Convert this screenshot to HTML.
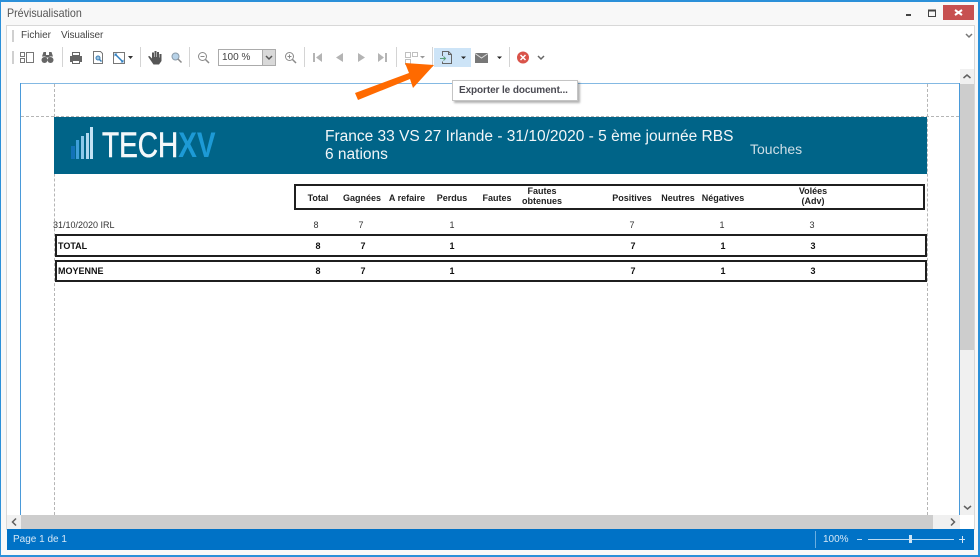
<!DOCTYPE html>
<html lang="fr">
<head>
<meta charset="utf-8">
<title>Prévisualisation</title>
<style>
html,body{margin:0;padding:0;width:980px;height:557px;overflow:hidden;background:#fff}
body{position:relative;font-family:"Liberation Sans",sans-serif}
.a{position:absolute}
.t{position:absolute;white-space:nowrap}
.ui{color:#444;font-size:10px}
.h{font-size:9px;font-weight:bold;color:#222;text-align:center;line-height:10px;transform:translateX(-50%)}
.d{font-size:9px;color:#333;transform:translateX(-50%)}
.b{font-size:9px;font-weight:bold;color:#111;transform:translateX(-50%)}
.box{position:absolute;border:2px solid #1f1f1f;box-sizing:border-box;background:#fff}
.sep{position:absolute;top:47px;width:1px;height:20px;background:#d4d4d4}
svg{position:absolute;left:0;top:0}
</style>
</head>
<body>
<div class="a" style="left:0;top:0;width:980px;height:557px;background:#f8f8f8"></div>
<div class="a" style="left:0;top:0;width:980px;height:2px;background:#2b90d9"></div>
<div class="a" style="left:0;top:0;width:1px;height:557px;background:#2b90d9"></div>
<div class="a" style="right:0;top:0;width:2px;height:557px;background:#2b90d9"></div>
<div class="a" style="left:0;top:555px;width:980px;height:2px;background:#2b90d9"></div>

<div class="t" style="left:7px;top:6px;font-size:12px;color:#555;transform:scaleX(.89);transform-origin:left center">Prévisualisation</div>
<div class="a" style="left:943px;top:5px;width:31px;height:15px;background:#c75050"></div>

<div class="a" style="left:6px;top:25px;width:969px;height:505px;box-sizing:border-box;border:1px solid #d8d8d8;background:#fff"></div>
<div class="a" style="left:12px;top:30px;width:2px;height:12px;background:#d0d0d0"></div>
<div class="a" style="left:12px;top:51px;width:2px;height:13px;background:#d0d0d0"></div>
<div class="t ui" style="left:21px;top:30px">Fichier</div>
<div class="t ui" style="left:61px;top:30px;letter-spacing:-.1px">Visualiser</div>

<div class="sep" style="left:62px"></div>
<div class="sep" style="left:140px"></div>
<div class="sep" style="left:189px"></div>
<div class="sep" style="left:304px"></div>
<div class="sep" style="left:396px"></div>
<div class="sep" style="left:432px"></div>
<div class="sep" style="left:509px"></div>

<div class="a" style="left:434px;top:48px;width:37px;height:19px;background:#cde4f7"></div>

<div class="a" style="left:218px;top:49px;width:58px;height:17px;box-sizing:border-box;border:1px solid #ababab;background:#fff"></div>
<div class="a" style="left:262px;top:49px;width:14px;height:17px;box-sizing:border-box;border:1px solid #ababab;background:#d9d9d9"></div>
<div class="t" style="left:222px;top:52px;font-size:10px;color:#444">100 %</div>

<!-- Viewer -->
<div class="a" style="left:20px;top:83px;width:940px;height:432px;background:#fff"></div>
<div class="a" style="left:20px;top:83px;width:940px;height:1px;background:#84b9e3"></div>
<div class="a" style="left:20px;top:83px;width:1px;height:432px;background:#4a9ad9"></div>
<div class="a" style="left:959px;top:83px;width:1px;height:432px;background:#4a9ad9"></div>

<!-- Guides -->
<div class="a" style="left:54px;top:84px;width:0;height:431px;border-left:1px dashed #b5b5b5"></div>
<div class="a" style="left:927px;top:84px;width:0;height:431px;border-left:1px dashed #b5b5b5"></div>
<div class="a" style="left:21px;top:116px;width:938px;height:0;border-top:1px dashed #b5b5b5"></div>

<!-- Banner -->
<div class="a" style="left:54px;top:117px;width:873px;height:57px;background:#006488"></div>
<div class="a" style="left:71px;top:146px;width:4px;height:13px;background:#1272b8"></div>
<div class="a" style="left:76px;top:140px;width:3px;height:19px;background:#3f9fd8"></div>
<div class="a" style="left:81px;top:136px;width:3px;height:23px;background:#8cc8ea"></div>
<div class="a" style="left:86px;top:133px;width:3px;height:26px;background:#b0d8f0"></div>
<div class="a" style="left:90px;top:127px;width:3px;height:32px;background:#c4e2f4"></div>
<div class="t" style="left:102px;top:126px;font-size:35px;line-height:40px;color:#f4f8fa;transform:scaleX(.8);transform-origin:left center;-webkit-text-stroke:.6px #f4f8fa">TECH<span style="color:#1d9ad6;font-weight:bold;-webkit-text-stroke:0">XV</span></div>
<div class="t" style="left:325px;top:128px;font-size:15.500px;line-height:18px;color:#f2f6f8">France 33 VS 27 Irlande - 31/10/2020 - 5 ème journée RBS<br>6 nations</div>
<div class="t" style="left:750px;top:141px;font-size:14px;color:#cfdfe7">Touches</div>

<!-- Table -->
<div class="box" style="left:294px;top:184px;width:631px;height:26px"></div>
<div class="t h" style="left:318px;top:193px">Total</div>
<div class="t h" style="left:362px;top:193px">Gagnées</div>
<div class="t h" style="left:407px;top:193px">A refaire</div>
<div class="t h" style="left:452px;top:193px">Perdus</div>
<div class="t h" style="left:497px;top:193px">Fautes</div>
<div class="t h" style="left:542px;top:186px">Fautes<br>obtenues</div>
<div class="t h" style="left:632px;top:193px">Positives</div>
<div class="t h" style="left:678px;top:193px">Neutres</div>
<div class="t h" style="left:723px;top:193px">Négatives</div>
<div class="t h" style="left:813px;top:186px">Volées<br>(Adv)</div>

<div class="t" style="left:53px;top:220px;font-size:9px;color:#333">31/10/2020 IRL</div>
<div class="t d" style="left:316px;top:220px">8</div>
<div class="t d" style="left:361px;top:220px">7</div>
<div class="t d" style="left:452px;top:220px">1</div>
<div class="t d" style="left:632px;top:220px">7</div>
<div class="t d" style="left:722px;top:220px">1</div>
<div class="t d" style="left:812px;top:220px">3</div>

<div class="box" style="left:55px;top:234px;width:872px;height:23px"></div>
<div class="t" style="left:58px;top:241px;font-size:9px;font-weight:bold;color:#111">TOTAL</div>
<div class="t b" style="left:318px;top:241px">8</div>
<div class="t b" style="left:363px;top:241px">7</div>
<div class="t b" style="left:452px;top:241px">1</div>
<div class="t b" style="left:633px;top:241px">7</div>
<div class="t b" style="left:723px;top:241px">1</div>
<div class="t b" style="left:813px;top:241px">3</div>

<div class="box" style="left:55px;top:260px;width:872px;height:22px"></div>
<div class="t" style="left:58px;top:266px;font-size:9px;font-weight:bold;color:#111">MOYENNE</div>
<div class="t b" style="left:318px;top:266px">8</div>
<div class="t b" style="left:363px;top:266px">7</div>
<div class="t b" style="left:452px;top:266px">1</div>
<div class="t b" style="left:633px;top:266px">7</div>
<div class="t b" style="left:723px;top:266px">1</div>
<div class="t b" style="left:813px;top:266px">3</div>

<!-- Scrollbars -->
<div class="a" style="left:960px;top:69px;width:14px;height:446px;background:#f0f0f0"></div>
<div class="a" style="left:960px;top:84px;width:14px;height:266px;background:#cdcdcd"></div>
<div class="a" style="left:7px;top:515px;width:953px;height:14px;background:#f0f0f0"></div>
<div class="a" style="left:21px;top:515px;width:912px;height:14px;background:#cdcdcd"></div>

<!-- Status bar -->
<div class="a" style="left:7px;top:529px;width:967px;height:21px;background:#0072c6"></div>
<div class="t" style="left:13px;top:534px;font-size:10px;color:#d6e8f6">Page 1 de 1</div>
<div class="a" style="left:815px;top:531px;width:1px;height:17px;background:#6aaee0"></div>
<div class="t" style="left:823px;top:534px;font-size:10px;color:#d6e8f6">100%</div>
<div class="a" style="left:857px;top:539px;width:5px;height:1px;background:#bcdcf3"></div>
<div class="a" style="left:868px;top:539px;width:86px;height:1px;background:#bcdcf3"></div>
<div class="a" style="left:909px;top:535px;width:3px;height:8px;background:#cfe6f6"></div>
<div class="a" style="left:959px;top:539px;width:6px;height:1px;background:#d6e8f6"></div>
<div class="a" style="left:962px;top:536px;width:1px;height:7px;background:#d6e8f6"></div>

<!-- Icons and overlays -->
<svg width="980" height="557" viewBox="0 0 980 557" xmlns="http://www.w3.org/2000/svg">
  <!-- window buttons -->
  <path d="M906 15h5" stroke="#444" stroke-width="2"/>
  <path d="M928.500 10.500h7v6h-7z" fill="none" stroke="#444"/><path d="M928 10.500h8" stroke="#444" stroke-width="2"/>
  <path d="M955 10l7 5M962 10l-7 5" stroke="#fff" stroke-width="2"/>
  <!-- menu chevron -->
  <path d="M966 34l3 3 3-3" fill="none" stroke="#777" stroke-width="1.500"/>

  <!-- panel icons -->
  <path d="M20.500 52.500h4v4h-4zM20.500 58.500h4v4h-4zM26.500 52.500h7v10h-7z" fill="none" stroke="#777"/>
  <!-- binoculars -->
  <path d="M43.500 52h2.500v3h3v-3h2.500l1.500 4.500h-3.500v1h-4v-1h-3.500z" fill="#666"/><circle cx="44.500" cy="60" r="3" fill="#666"/><circle cx="50.500" cy="60" r="3" fill="#666"/>
  <!-- printer -->
  <path d="M72.500 52.500h7v3h-7z" fill="none" stroke="#666"/><path d="M70 56h12v6h-2v-2h-8v2h-2z" fill="#666"/><path d="M72.500 60.500h7v3h-7z" fill="none" stroke="#666"/>
  <!-- preview -->
  <path d="M93.500 51.500h7l2 2v10h-9z" fill="none" stroke="#777"/><circle cx="98" cy="58" r="2" fill="#9cc3e0" stroke="#3c80b8"/><path d="M99.500 59.500l2 2" stroke="#3c80b8" stroke-width="1.500"/>
  <!-- page setup -->
  <path d="M113.500 52.500h11v11h-11z" fill="none" stroke="#777"/><path d="M115 54l8 8" stroke="#2f7fc1" stroke-width="1.500"/><path d="M114.500 53.500h3l-3 3zM123.500 62.500h-3l3-3z" fill="#2f7fc1"/>
  <path d="M128 56h5l-2.500 3z" fill="#333"/>
  <!-- hand -->
  <path d="M148 56.500l1.500-.5 2.500 2.500v-6h2v4.500h.5v-6h2v6h.5v-5h2v5.500h.5v-3.500h2v7l-2.500 3.500h-5.500z" fill="#555"/>
  <!-- zoom blue -->
  <circle cx="175.500" cy="56.500" r="3.500" fill="#b7d2e8" stroke="#8a9aa8"/><path d="M178 59l3.500 3.500" stroke="#8a8a8a" stroke-width="1.500"/>
  <!-- zoom out -->
  <circle cx="202.500" cy="56.500" r="4" fill="none" stroke="#8a8a8a"/><path d="M200.500 56.500h4" stroke="#8a8a8a"/><path d="M205.500 59.500l3.500 3.500" stroke="#8a8a8a" stroke-width="1.500"/>
  <!-- combo arrow -->
  <path d="M266 56l3 3 3-3" fill="none" stroke="#555" stroke-width="1.500"/>
  <!-- zoom in -->
  <circle cx="289.500" cy="56.500" r="4" fill="none" stroke="#8a8a8a"/><path d="M287.500 56.500h4M289.500 54.500v4" stroke="#8a8a8a"/><path d="M292.500 59.500l3.500 3.500" stroke="#8a8a8a" stroke-width="1.500"/>
  <!-- nav -->
  <path d="M313 53h2v9h-2zM322 53v9l-6-4.500z" fill="#b4b4b4"/>
  <path d="M343 53v9l-7-4.500z" fill="#b4b4b4"/>
  <path d="M358 53v9l7-4.500z" fill="#b4b4b4"/>
  <path d="M378 53v9l6-4.500zM385 53h2v9h-2z" fill="#b4b4b4"/>
  <!-- multipage -->
  <path d="M405.500 52.500h5v5h-5zM412.500 52.500h5v4h-5zM405.500 59.500h5v5h-5z" fill="none" stroke="#c0c0c0"/>
  <path d="M420 56h5l-2.500 2.500z" fill="#999"/>
  <!-- export -->
  <path d="M442.500 56v-4.500h6l3 3v9h-9v-2" fill="none" stroke="#666"/><path d="M448.500 51.500v3h3" fill="none" stroke="#666"/><path d="M440 58.500h5" stroke="#5aa07a"/><path d="M443.500 56.500l2 2-2 2" fill="none" stroke="#5aa07a"/>
  <path d="M461 56.500h5l-2.500 2.500z" fill="#222"/>
  <!-- mail -->
  <path d="M475 53h13v10h-13z" fill="#777"/><path d="M475 53.500l6.500 4.500 6.500-4.500" fill="none" stroke="#ddd"/>
  <path d="M497 56.500h5l-2.500 2.500z" fill="#222"/>
  <!-- close red -->
  <circle cx="523" cy="57.500" r="6" fill="#d9534a"/><path d="M520.500 55l5 5M525.500 55l-5 5" stroke="#fff" stroke-width="1.500"/>
  <path d="M538 56l3 3 3-3" fill="none" stroke="#666" stroke-width="1.500"/>

  <!-- scroll arrows -->
  <path d="M963.500 78l3.500-3 3.500 3" fill="none" stroke="#606060" stroke-width="1.500"/>
  <path d="M964 506l3.500 3 3.500-3" fill="none" stroke="#606060" stroke-width="1.500"/>
  <path d="M16 518.500l-3.500 3.500 3.500 3.500" fill="none" stroke="#606060" stroke-width="1.500"/>
  <path d="M951 518.500l3.500 3.500-3.500 3.500" fill="none" stroke="#606060" stroke-width="1.500"/>

  <!-- arrow -->
  <path d="M355 93l54-20-4-10 29 2-21 23-3-9-52 21z" fill="#ff6a00"/>
</svg>

<!-- Tooltip -->
<div class="a" style="left:452px;top:80px;width:126px;height:21px;box-sizing:border-box;border:1px solid #c4c4c4;background:#fff;box-shadow:2px 2px 2px rgba(0,0,0,.3)"></div>
<div class="t" style="left:459px;top:85px;font-size:10px;font-weight:bold;color:#4a4a52;letter-spacing:-.1px">Exporter le document...</div>
</body>
</html>
